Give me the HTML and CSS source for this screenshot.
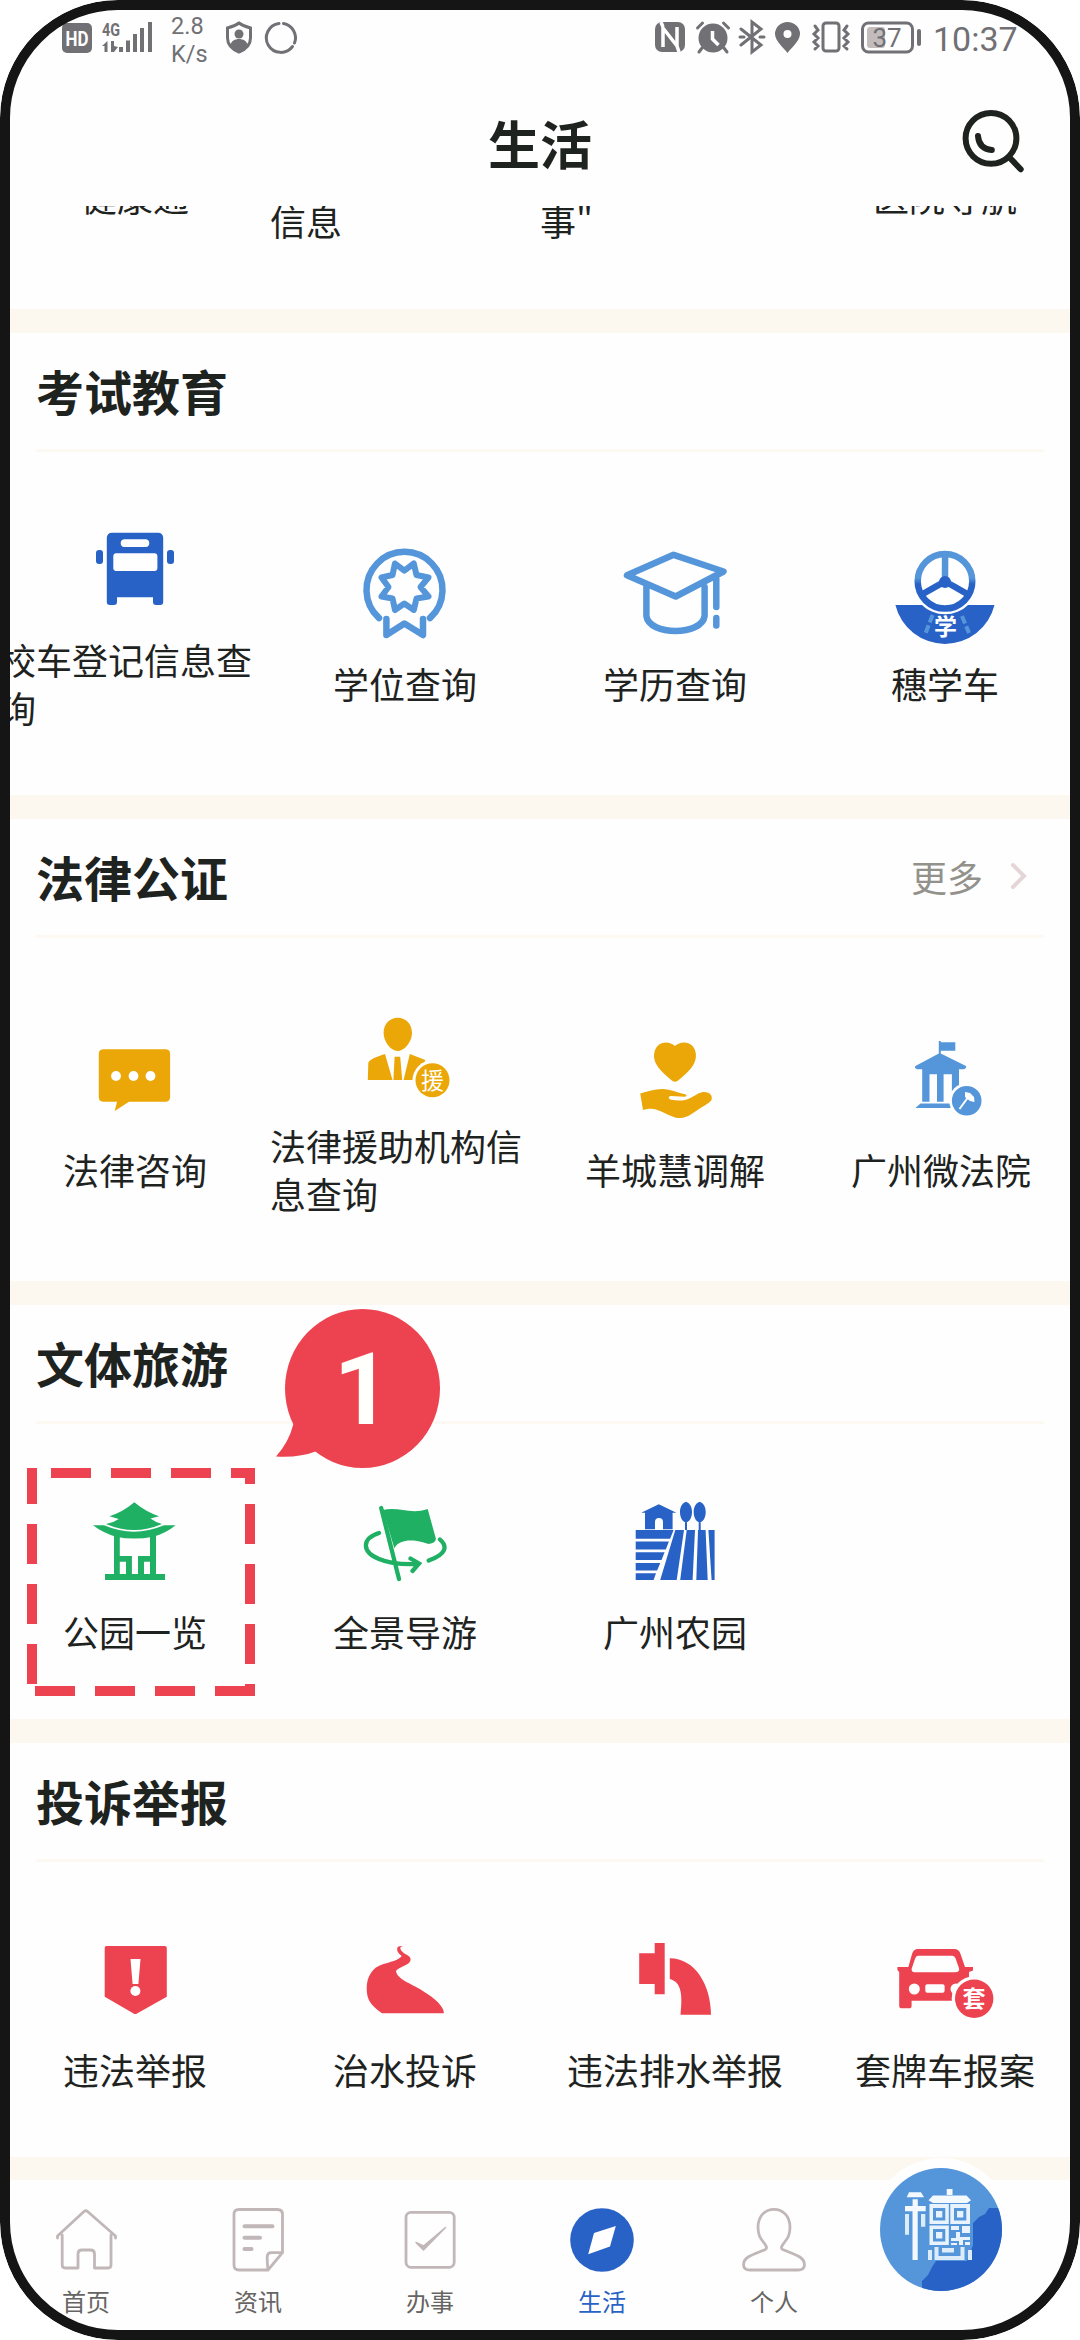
FILE: index.html
```html
<!DOCTYPE html>
<html lang="zh-CN">
<head>
<meta charset="utf-8">
<title>生活</title>
<link rel="stylesheet" href="styles.css">
</head>
<body>
<div class="phone">
  <div class="status">
    <svg class="s-hd" width="30" height="34" viewBox="0 0 30 34"><rect y="3" width="30" height="30" rx="5"/><text class="hd-text" x="15" y="25.500" text-anchor="middle" textLength="23" lengthAdjust="spacingAndGlyphs">HD</text></svg>
    <svg class="s-signal" width="51" height="34" viewBox="0 0 51 34"><text class="net-text" x="0" y="15.500" textLength="18" lengthAdjust="spacingAndGlyphs">4G</text><path d="M5.500 21v11h-3v-6H0zM9 21h3v5l4 1-4 5H9zM17 27h4v5h-4zM24 20.500h4V32h-4zM31 14h4v18h-4zM38 8h4v24h-4zM46 2h4v30h-4z"/></svg>
    <div class="speed"><span>2.8</span><span>K/s</span></div>
    <svg class="s-shield" width="26" height="34" viewBox="0 0 26 34"><path class="line" d="M13 3C9 6 5 7 1.500 8v10c0 6 4 11 11.500 14 7.500-3 11.500-8 11.500-14V8C21 7 17 6 13 3z"/><circle cx="13" cy="14" r="4.500"/><path d="M4.500 25c1-8 16-8 17 0-2 3.500-5 6-8.500 7.500-3.500-1.500-6.500-4-8.500-7.500z"/></svg>
    <svg class="s-ring" width="32" height="34" viewBox="0 0 32 34"><path class="line" d="M18.500 3.500A14.500 14.500 0 0 1 29.500 23M27.500 26.500A14.500 14.500 0 1 1 14 3.500"/></svg>
    <div class="status-right">
      <svg width="30" height="34" viewBox="0 0 30 34"><rect y="2" width="30" height="30" rx="7"/><path class="cut" d="M8 27V8l14 18V7M8 7l-2-5M22 26l2 6"/></svg>
      <svg class="s-alarm" width="34" height="34" viewBox="0 0 34 34"><circle cx="17" cy="18" r="14.500"/><path class="line" d="M1.500 8l5-5M32.500 8l-5-5M6 28l-3 4M28 28l3 4"/><path class="cut" d="M16.500 11v8l6 6"/></svg>
      <svg class="s-bt" width="24" height="34" viewBox="0 0 24 34"><path class="line" d="M1 9l20 16-9 7V2l9 7L1 25M0 17h4M20 17h4"/></svg>
      <svg class="s-pin" width="25" height="34" viewBox="0 0 25 34"><path fill-rule="evenodd" d="M12.500 33C9 28 0 21 0 14a12.500 12 0 0 1 25 0c0 7-9 14-12.500 19zM12.500 18a4 4 0 1 0 0-8 4 4 0 0 0 0 8z"/></svg>
      <svg class="s-vib" width="38" height="34" viewBox="0 0 38 34"><rect class="line" x="11" y="3" width="16" height="28" rx="3"/><path class="line" d="M3 6l3 4-4 4 4 4-4 4 4 4-3 3M35 6l-3 4 4 4-4 4 4 4-4 4 3 3"/></svg>
      <svg class="s-bat" width="60" height="34" viewBox="0 0 60 34"><rect class="line" x="1.500" y="3" width="50" height="29" rx="6"/><rect class="charge" x="6" y="7" width="18" height="21" rx="3"/><rect x="56" y="9" width="4" height="17" rx="2"/><text class="bat-text" x="26" y="27" text-anchor="middle">37</text></svg>
      <span class="time">10:37</span>
    </div>
  </div>

  <header class="header">
    <h1>生活</h1>
    <svg class="search" width="64" height="64" viewBox="0 0 64 64"><circle cx="31" cy="30.300" r="25.400"/><path d="M18 28Q19 41 31.800 42M49 49l11.700 12.300"/></svg>
  </header>

  <main class="content">
    <section class="clipped">
      <span class="up">健康通</span>
      <span class="left">信息</span>
      <span class="left">事"</span>
      <span class="up">医院导航</span>
    </section>

    <section class="section">
      <div class="head"><h2>考试教育</h2></div>
      <div class="grid">
        <div class="item">
          <svg class="icon blue" viewBox="0 0 100 100"><path fill-rule="evenodd" d="M27 12.700h46a5 5 0 0 1 5.200 5V82a3 3 0 0 1-3 3H71a3 3 0 0 1-3-3v-4.700H32V82a3 3 0 0 1-3 3h-4.200a3 3 0 0 1-3-3V17.700a5 5 0 0 1 5.200-5zM39 19.300a3.900 3.900 0 0 0 0 7.700h22a3.900 3.900 0 0 0 0-7.700zM31 33.300a3 3 0 0 0-2.700 3V48a3 3 0 0 0 2.700 3h38.500a3 3 0 0 0 2.900-3V36.300a3 3 0 0 0-2.900-3z"/><rect x="11" y="30" width="7" height="14" rx="3"/><rect x="82" y="30" width="7" height="14" rx="3"/></svg>
          <span class="label">校车登记信息查询</span>
        </div>
        <div class="item">
          <svg class="icon sky-line" viewBox="0 0 100 100"><path d="M24 74A38 38 0 1 1 75 74"/><path class="thin" d="M40 19.500l9.300 7.200L58.800 19.500 61.500 31 73.500 33.500 65.500 43 73.500 52.500 61.500 54.500 58.800 66 49.300 59.500 40 66 37.500 54.500 26.500 52.500 33.500 43 26.500 33.500 37.500 31z"/><path d="M31.400 75v16l18-11.500L68 91V75"/></svg>
          <span class="label">学位查询</span>
        </div>
        <div class="item">
          <svg class="icon sky-line" viewBox="0 0 100 100"><path d="M48.600 10.800L98.500 27.500 50.700 52.500 2 31.200zM21.400 43v29C24 92 77 92 79.600 72V43M91.300 35v28M91.300 74v7.500"/></svg>
          <span class="label">学历查询</span>
        </div>
        <div class="item">
          <svg class="icon" viewBox="0 0 100 100"><defs><linearGradient id="wheel" gradientUnits="userSpaceOnUse" x1="0" y1="6" x2="0" y2="68"><stop offset=".45" stop-color="#5596db"/><stop offset=".55" stop-color="#2862c6"/></linearGradient></defs><path fill="#2862c6" d="M.4 61h99.100A51 51 0 0 1 .4 61z"/><circle cx="50" cy="37.300" r="33" fill="#fff"/><g fill="none" stroke="url(#wheel)" stroke-width="6.500"><circle cx="50" cy="37.300" r="27.300"/><path d="M50.100 10L50 37.300 26 51M50 37.300L74 51"/></g><circle cx="50" cy="38" r="6" fill="#2862c6"/><path fill="none" stroke="#5596db" stroke-width="4" stroke-dasharray="8 3" d="M37.600 71l-7 18M67 72l7 17"/><text class="badge heavy" x="50.500" y="91">学</text></svg>
          <span class="label">穗学车</span>
        </div>
      </div>
    </section>

    <section class="section">
      <div class="head"><h2>法律公证</h2><span class="more">更多</span><svg class="chevron" width="15" height="26" viewBox="0 0 15 26"><path d="M2 2l11 11L2 24"/></svg></div>
      <div class="grid">
        <div class="item">
          <svg class="icon orange" viewBox="0 0 100 100"><path fill-rule="evenodd" d="M18 19.300h63a4.500 4.500 0 0 1 4.100 4.500v43.400a4.500 4.500 0 0 1-4.500 4.500H44L29.700 81 32 71.700H18a4.500 4.500 0 0 1-4.200-4.500V23.800a4.500 4.500 0 0 1 4.200-4.500z"/><g fill="#fff"><circle cx="31" cy="46" r="4.900"/><circle cx="48.500" cy="46" r="4.900"/><circle cx="65.500" cy="46" r="4.900"/></g></svg>
          <span class="label">法律咨询</span>
        </div>
        <div class="item">
          <svg class="icon orange" viewBox="0 0 100 100"><path d="M42.700 11.700C51 11.700 57 18 57 27c0 8-7 18-14.300 18S28.600 35 28.600 27c0-9 6-15.300 14.100-15.300zM30 48l7.500 26H12.800l.5-17C14 53 24 50 30 48zM39.600 50.700h5.600L47.200 74h-8.800zM54.800 48l15.500 6L64 74H48.600z"/><circle cx="77.500" cy="74.300" r="20" fill="#fff"/><circle cx="77.500" cy="74.300" r="17"/><text class="badge" x="77.500" y="82.500">援</text></svg>
          <span class="label">法律援助机构信息查询</span>
        </div>
        <div class="item">
          <svg class="icon orange" viewBox="0 0 100 100"><path d="M50 16c5-5 13-4.500 17-.5 5 5 5 13 1.500 19C65 41 57 47 52.500 51q-2.500 1.500-5 0C43 47 35 41 31.500 34.500 28 28.500 28 20.500 33 15.500c4-4 12-4.500 17 .5z"/><path d="M15.200 63.500C22 61.500 30 59 37 59c9 0 17 4.500 23 5.200 2 .3 2 2.300 0 2.500L46 66c-3 0-3 3 0 3.700 6 1 12 1.500 17-.7 7-3 10-6 15-7 7-.5 10 4 8.500 8-3 4-10 7-18.500 13-8 6-15 6.500-23 2.500-7-3-12-6-17-6.500-4-.5-7 .5-10 1z"/></svg>
          <span class="label">羊城慧调解</span>
        </div>
        <div class="item">
          <svg class="icon sky" viewBox="0 0 100 100"><path fill-rule="evenodd" d="M43.800 11h2v1.300h14.500v8.400H45.800v2.900L71 36q1 2-2 3.300h-5v32.400H27.200V39.300H22q-3-1.300-1.600-3.300l23.400-12.600zM34.500 44.300v27.400H42V44.300zM48.600 44.300v27.400h8.300V44.300zM25.500 73.500H57V78H20.400z"/><circle cx="71.700" cy="70.700" r="17.500" fill="#fff"/><circle cx="71.700" cy="70.700" r="14.800"/><path d="M74 66L64.500 79" stroke="#fff" stroke-width="2"/><path fill="#fff" d="M70 62l5 1 4 4 .5 5-4.500-1-5-4z"/></svg>
          <span class="label">广州微法院&nbsp;</span>
        </div>
      </div>
    </section>

    <section class="section">
      <div class="head"><h2>文体旅游</h2></div>
      <div class="grid">
        <div class="item">
          <svg class="icon green" viewBox="0 0 100 100"><path d="M49.300 10.300Q61 20 74 24.200L65.500 26.500Q70 30 77 32Q49 44 21 32Q28 31 33.800 27L24.500 24.200Q38 20 49.300 10.300zM8 33.300h11Q49 46 79 33.300h11.600Q80 42 68 44.700Q49 48.500 31 44.700Q18 41 8 33.300z"/><path d="M29 43h5.800v21h12.100v18H41V69.700h-6.200V82H29zM65 43h6v39h-6V69.700h-6V82h-6V64h12zM20 82h60v6H20z"/></svg>
          <span class="label">公园一览</span>
        </div>
        <div class="item">
          <svg class="icon green" viewBox="0 0 100 100"><path d="M28 18c15-4 27 5 44.700-1l8 29q1 5-7 6c-8-3-28-8-34.400 4.300z"/><g fill="none" stroke="#20b064" stroke-width="4.300" stroke-linecap="round"><path d="M26.200 16L44 87M24 41C6 47 7 60 24 67q14 6 38 5M55.500 66.500l8.500 5-6.500 7.500M85 47.500c8 7 6 15-11.300 21"/></g></svg>
          <span class="label">全景导游</span>
        </div>
        <div class="item">
          <svg class="icon blue" viewBox="0 0 100 100"><path fill-rule="evenodd" d="M33.800 12.300l17.600 8.500h-3.800v16.500H20V20.800h-3.800zM30 37.300h8V30a4 4 0 0 0-8 0z"/><path d="M61 9.700c9 3 7 20 0 20.600-7-.6-9-17.600 0-20.600zM74.700 9.700c9 3 7 20 0 20.600-7-.6-9-17.600 0-20.600zM60 29h2v9h-2zM73.700 29h2v9h-2z"/><path d="M10.700 38h37.900l-3.500 8.700H10.700zM10.700 49.500h33.200l-3.100 7.900H10.700zM10.700 60.300h28.900L36.500 68H10.700zM10.700 71h24.600l-3.200 7.600H10.700zM10.700 81.300H31L28.600 88H10.700zM50.300 38H59l-7.300 50H35.200zM61.700 38H70l-2.400 50H55.200zM73 38h7.600l2.100 50H71.300zM83.400 38h6.200v50h-3z"/></svg>
          <span class="label">广州农园</span>
        </div>
      </div>
      <svg class="marker" width="228" height="228" viewBox="0 0 228 228"><path d="M24 5H228M8 223H228"/><path d="M5 0V216" stroke-dashoffset="4"/><path d="M223 0V228" stroke-dashoffset="24"/></svg>
      <div class="step">
        <svg width="164" height="160" viewBox="0 0 164 160"><ellipse cx="86.500" cy="79.500" rx="77.500" ry="79.500"/><path d="M17.400 115Q13 133 0 147.500Q23 149 41 142z"/></svg>
        <span>1</span>
      </div>
    </section>

    <section class="section">
      <div class="head"><h2>投诉举报</h2></div>
      <div class="grid">
        <div class="item">
          <svg class="icon red" viewBox="0 0 100 100"><path d="M21.500 16h58.300q2 0 2 2v48.700L52 83.500q-1.700 1-3.400 0L19.700 66.700V18q0-2 1.800-2z"/><path fill="#fff" d="M45.500 29h10L53.400 54h-5.800z"/><circle cx="50.400" cy="61" r="5" fill="#fff"/></svg>
          <span class="label">违法举报</span>
        </div>
        <div class="item">
          <svg class="icon red" viewBox="0 0 100 100"><path d="M49.600 16.700c-5-.7-5 1.500-3 4.300 3 4 9 4 9 8.500 0 6-12 7-14.600 11.500C42 50 60 55 68.600 61.500 79 68 89 76 88.900 83.300H27C15 75 11.700 69 11.700 58.300c0-12 6-21 16-24 7-2.300 16-4 19-8.300-3-2-5-5-4.500-7.500.4-2.500 4-3 7.400-1.800z"/></svg>
          <span class="label">治水投诉</span>
        </div>
        <div class="item">
          <svg class="icon red" viewBox="0 0 100 100"><path d="M14.200 23.300h15.500V13h10v51.300h-10V54H14.200zM44.800 28.300C70 28.300 86 55 86 84.700H55.500C57.500 66 57 52 44.800 49z"/></svg>
          <span class="label">违法排水举报</span>
        </div>
        <div class="item">
          <svg class="icon red" viewBox="0 0 100 100"><path fill-rule="evenodd" d="M23 19h36q5 0 6.500 5l4.500 13h8v3.500l-4 1.500v5L60 70.700H16.600v5q0 2.600-2.600 2.600H7q-2.800 0-2.800-2.600V42L2.400 40v-3h11L17 24q1.500-5 6-5zM23 25.700q-2 0-3 3L16.600 39q0 3.300 3 3.300H60q5 0 4-4l-3.500-10q-1-2.600-3-2.600z"/><g fill="#fff"><circle cx="19.300" cy="59" r="5.500"/><circle cx="61" cy="59" r="5.500"/><rect x="30.300" y="54.300" width="19.300" height="8.500" rx="2"/><circle cx="79.200" cy="68.700" r="22.500"/></g><circle cx="79.200" cy="68.700" r="19.200"/><text class="badge heavy" x="79" y="77">套</text></svg>
          <span class="label">套牌车报案</span>
        </div>
      </div>
    </section>
  </main>

  <nav class="nav">
    <div class="tab"><svg viewBox="0 0 70 70"><path d="M11.200 30v30q0 3 3 3H27V49q0-4 4-4h8.500q4 0 4 4v14H57q3 0 3-3V30M6.500 33v-2L33 6.500q1.800-1.500 3.600 0L64.500 31v2"/></svg><span>首页</span></div>
    <div class="tab"><svg viewBox="0 0 70 70"><path d="M45 65H16q-5 0-5-5V9.500q0-5 5-5h38.500q5 0 5 5v38.200zq-.8-6-.8-13 0-4.300 4.300-4.300h11"/><path class="bold" d="M21.500 21.300h28M21.500 32.700h15.500M21.500 44h7"/></svg><span>资讯</span></div>
    <div class="tab"><svg viewBox="0 0 70 70"><rect x="11" y="7.300" width="48.200" height="55" rx="5"/><path class="solid" d="M21 37.500l7.500 3.500L50.500 22.500 28.500 45z"/></svg><span>办事</span></div>
    <div class="tab active"><svg viewBox="0 0 70 70"><circle class="disc" cx="35" cy="35" r="31.800"/><path class="needle" d="M48.800 21L43 41.500 21.200 49.300 27 28z"/></svg><span>生活</span></div>
    <div class="tab"><svg viewBox="0 0 70 70"><path d="M35 4.300c9 0 16 7 16 18 0 11-5 13-8.200 19-.8 2 .2 3 2 3.700 6 2.500 12 4.500 16 7 6 4 7 13-1.800 13H11C2.200 65 3.200 56 9.200 52c4-2.500 10-4.500 16-7 1.800-.7 2.800-1.700 2-3.700C24 35.300 19 33.300 19 22.300c0-11 7-18 16-18z"/></svg><span>个人</span></div>
    <div class="code">
      <svg width="122" height="123" viewBox="0 0 122 123"><defs><clipPath id="disc"><ellipse cx="61" cy="61.500" rx="61" ry="61.500"/></clipPath></defs><g clip-path="url(#disc)"><path fill="#5596db" d="M0 0h122v123H0z"/><path fill="#2862c6" d="M122 40h-13l-4 6-6 3-6 6v22l-6 16H56l-4 6-4 8-6 6v12h80z"/></g><path fill="#f3f9ff" d="M29 24.300h12l3 5H26.700zM25 38h20.700v5.300h-8V92h-5.200V43.300H25zM32.600 31.300h5.200V39h-5.200zM66.700 21h5.800v6h-5.800zM53 27.500h33.500l4.500 4.800-4 2.700H53l-4.500-2.700z"/><path fill="#dcecfb" d="M25 46h4v20.700h-4zM41 46h4.300v12.700H41zM48 82h4v10h-4zM88 82h4v10h-4zM54.500 79h4v9h22v-9h4v13h-30zM62 80h12v4.500H62z"/><path fill="#e8f3fd" fill-rule="evenodd" d="M49.500 36h19.300v20H49.500zM53 40v12.500h12.300V40zM70.300 36H90v20H70.300zM74 40v12.500h12.300V40zM49.500 57.500h19.300V77H49.500zM53 61v12.500h12.300V61zM56 43h6.300v6.500H56zM77 43h6.300v6.500H77zM56 64h6.300v6.500H56zM71 58h8v4h-8zM82 58h8v7h-8zM76 64h4v5h10v3h-7v5h-4v-4h-8v-3h5zM71 75h6v2h-6zM85 74h5v3h-5z"/></svg>
    </div>
  </nav>
</div>
</body>
</html>
```
FILE: styles.css
```css
* { box-sizing: border-box; }

body {
  margin: 0;
  background: #fff;
  color: #1e231f;
  font-family: "Noto Sans CJK SC", sans-serif;
}

svg { display: block; flex: none; overflow: visible; }

.phone {
  position: relative;
  display: flex;
  flex-direction: column;
  width: 1080px;
  height: 2340px;
  overflow: hidden;
  border-radius: 118px;
  background: #fefefe;
}

/* device bezel drawn over the screen */
.phone::after {
  content: "";
  position: absolute;
  inset: 0;
  border: 10px solid #151515;
  border-radius: 118px;
  pointer-events: none;
}

/* status bar */
.status {
  display: flex;
  height: 90px;
  padding: 20px 64px 0 62px;
  color: #717075;
  fill: #717075;
  font-family: Roboto, sans-serif;
}
.status .line { fill: none; stroke: #717075; stroke-width: 3; stroke-linecap: round; }
.status .cut { fill: none; stroke: #fff; stroke-width: 3.500; }
.status .charge { fill: #c3bcbd; }
.hd-text { fill: #fff; font-size: 20px; font-weight: 700; }
.net-text { font-size: 19px; font-weight: 700; }
.bat-text { font-size: 26px; }
.s-signal { margin-left: 10px; }
.speed {
  display: flex;
  flex-direction: column;
  width: 34px;
  margin: -8px 0 0 18px;
  font-size: 23.500px;
  line-height: 28px;
}
.s-shield { margin-left: 21px; }
.s-ring { margin-left: 13px; }
.status-right { display: flex; margin-left: auto; }
.s-alarm { margin-left: 11px; }
.s-bt { margin-left: 10px; }
.s-pin { margin-left: 11px; }
.s-vib { margin-left: 12px; }
.s-bat { margin-left: 11px; }
.time { width: 83px; margin-left: 12px; font-size: 34px; line-height: 38px; }

/* page header */
.header {
  display: grid;
  grid-template-columns: 1fr auto 1fr;
  height: 116px;
  padding: 18px 56px 0;
}
.header h1 {
  grid-column: 2;
  margin: 0;
  font-size: 52px;
  font-weight: 700;
  line-height: 70px;
}
.search {
  justify-self: end;
  fill: none;
  stroke: #1e231f;
  stroke-width: 6;
  stroke-linecap: round;
}

/* scrolled content */
.content { height: 1974px; overflow: hidden; }

.clipped {
  display: grid;
  grid-template-columns: repeat(4, 270px);
  height: 103px;
  overflow: hidden;
  text-align: center;
  font-size: 36px;
  line-height: 48px;
}
.clipped .up { margin-top: -34px; }
.clipped .left { margin-top: -10px; text-align: left; }

.section {
  position: relative;
  border-top: 24px solid #fcf8f0;
}
.section:last-child { border-bottom: 24px solid #fcf8f0; }

.head {
  display: flex;
  align-items: center;
  height: 119px;
  margin: 0 36px;
  padding-bottom: 23px;
  border-bottom: 3px solid #fdf9f2;
}
.head h2 {
  flex: 1;
  margin: 0;
  padding-top: 20px;
  font-size: 48px;
  font-weight: 700;
  line-height: 70px;
}
.more { padding-top: 20px; color: #92918b; font-size: 36px; line-height: 48px; }
.chevron {
  margin: 20px 18px 0 28px;
  fill: none;
  stroke: #e4d6d8;
  stroke-width: 4;
  stroke-linecap: round;
}

.grid {
  display: grid;
  grid-template-columns: repeat(4, 270px);
  align-items: center;
  padding: 68px 0 64px;
}
.item { display: flex; flex-direction: column; align-items: center; gap: 15px; }
.icon { width: 100px; height: 100px; }
.label { font-size: 36px; line-height: 48px; }

.blue { fill: #2862c6; }
.sky { fill: #5596db; }
.orange { fill: #eba707; }
.green { fill: #20b064; }
.red { fill: #ed4350; }
.sky-line {
  fill: none;
  stroke: #5596db;
  stroke-width: 6.500;
  stroke-linecap: round;
  stroke-linejoin: round;
}
.sky-line .thin { stroke-width: 6; }
.badge { fill: #fff; font-size: 23px; text-anchor: middle; }
.heavy { font-weight: 700; }

/* guide overlay */
.marker {
  position: absolute;
  left: 27px;
  top: 163px;
  overflow: hidden;
  fill: none;
  stroke: #ed4350;
  stroke-width: 10;
  stroke-dasharray: 40 20;
}
.step {
  position: absolute;
  left: 276px;
  top: 4px;
  fill: #ed4350;
}
.step span {
  position: absolute;
  left: 9px;
  top: 0;
  width: 155px;
  color: #fffffb;
  font: 700 101px/162px Roboto, sans-serif;
  text-align: center;
}

/* bottom tabs */
.nav {
  display: flex;
  height: 160px;
}
.tab {
  display: flex;
  flex-direction: column;
  align-items: center;
  gap: 11px;
  width: 172px;
  padding-top: 25px;
  color: #666563;
  font-size: 24px;
  line-height: 30px;
}
.tab svg {
  width: 70px;
  height: 70px;
  fill: none;
  stroke: #c1b7b8;
  stroke-width: 2.800;
  stroke-linecap: round;
  stroke-linejoin: round;
}
.tab .bold { stroke-width: 4; }
.tab .solid { fill: #c1b7b8; stroke-width: 1.500; }
.tab .disc { fill: #2862c6; stroke: none; }
.tab .needle { fill: #fff; stroke: none; }
.active { color: #2862c6; }
.code {
  z-index: 1;
  align-self: flex-start;
  margin: -22px 0 0 10px;
  padding: 10px;
  border-radius: 50%;
  background: #fefefe;
}
```
